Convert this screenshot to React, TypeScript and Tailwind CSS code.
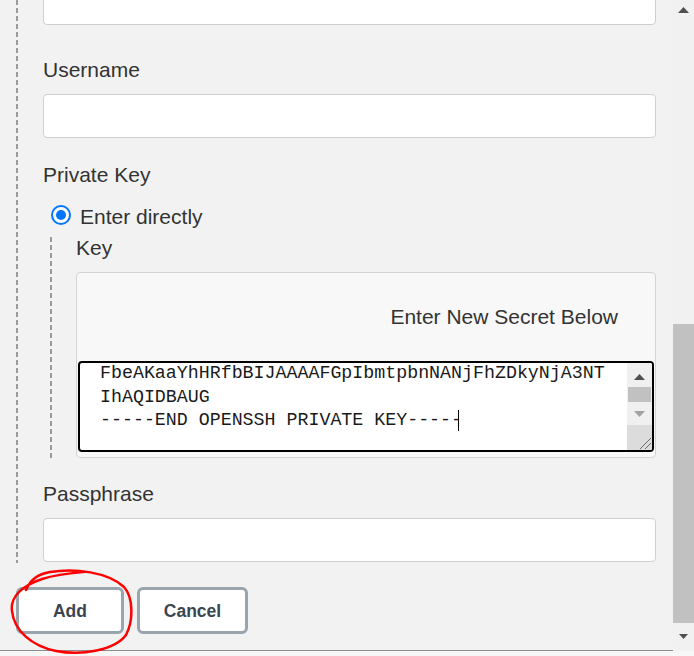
import React from "react";

const SANS = { fontFamily: '"Liberation Sans", Arial, sans-serif' };

function Label({ children }: { children: React.ReactNode }) {
  return (
    <div className="text-[21px] leading-[24px] text-[#333333]" style={SANS}>
      {children}
    </div>
  );
}

function TextInput({ className = "" }: { className?: string }) {
  return (
    <div
      className={`h-[44px] w-full rounded-[4px] border border-[#cfcfcf] bg-white ${className}`}
    />
  );
}

function KeyTextarea() {
  return (
    <div className="mx-[1px] flex h-[91px] overflow-hidden rounded-[4px] border-2 border-black bg-white">
      <div
        className="flex-1 overflow-hidden pl-[20px] text-[18.3px] leading-[23.5px] text-[#1a1a1a]"
        style={{ fontFamily: '"Liberation Mono", "Courier New", monospace' }}
      >
        <div className="mt-[-1px] whitespace-pre">FbeAKaaYhHRfbBIJAAAAFGpIbmtpbnNANjFhZDkyNjA3NT</div>
        <div className="whitespace-pre">IhAQIDBAUG</div>
        <div className="flex items-center whitespace-pre">
          <span>-----END OPENSSH PRIVATE KEY-----</span>
          <span className="ml-[-4px] inline-block h-[21px] w-[1px] bg-black" />
        </div>
      </div>
      <div className="flex w-[25px] flex-col bg-[#f0f0f0]">
        <div className="flex h-[24px] items-end justify-center pb-[7px]">
          <svg width="11" height="6" viewBox="0 0 11 6">
            <polygon points="5.5,0 11,6 0,6" fill="#505050" />
          </svg>
        </div>
        <div className="mx-[1px] h-[15px] bg-[#c1c1c1]" />
        <div className="flex h-[23px] items-start justify-center pt-[9px]">
          <svg width="11" height="6" viewBox="0 0 11 6">
            <polygon points="0,0 11,0 5.5,6" fill="#a3a3a3" />
          </svg>
        </div>
        <div className="relative flex-1 bg-[#dcdcdc]">
          <svg className="absolute bottom-0 right-0" width="14" height="14" viewBox="0 0 14 14">
            <line x1="13" y1="2" x2="2" y2="13" stroke="#6b6b6b" strokeWidth="1" />
            <line x1="13" y1="7" x2="7" y2="13" stroke="#6b6b6b" strokeWidth="1" />
          </svg>
        </div>
      </div>
    </div>
  );
}

const DASH =
  "bg-[repeating-linear-gradient(to_bottom,#9a9a9a_0px,#9a9a9a_5px,transparent_5px,transparent_8px)]";

export default function App() {
  return (
    <div className="relative h-[656px] w-[694px] overflow-hidden bg-[#f2f2f2]" style={SANS}>
      <div className="flex h-[650px]">
        {/* main column */}
        <div className="flex w-[673px] flex-col">
          <div className="flex">
            <div className="w-[16px]" />
            <div className={`w-[2px] ${DASH}`} />
            <div className="w-[638px] pl-[25px]">
              <TextInput className="mt-[-19px]" />
              <div className="mt-[33px]">
                <Label>Username</Label>
              </div>
              <TextInput className="mt-[12px]" />
              <div className="mt-[25px]">
                <Label>Private Key</Label>
              </div>
              <div className="mt-[16px] flex h-[24px] items-center pl-[8px]">
                <div className="flex h-[20px] w-[20px] items-center justify-center rounded-full border-[2.5px] border-[#0075ff] bg-white">
                  <div className="h-[10px] w-[10px] rounded-full bg-[#0075ff]" />
                </div>
                <div className="ml-[9px] mt-[3px] text-[21px] leading-[24px] text-[#333333]">Enter directly</div>
              </div>
              <div className="mt-[9px] flex">
                <div className="w-[7px]" />
                <div className={`w-[2px] ${DASH} mt-[1px]`} />
                <div className="flex-1 pl-[24px]">
                  <Label>Key</Label>
                  <div className="mt-[12px] h-[186px] rounded-[4px] border border-[#d4d4d4] bg-[#f8f8f8]">
                    <div className="mt-[30px] h-[28px] pr-[37px] text-right text-[21px] leading-[28px] text-[#333333]">
                      Enter New Secret Below
                    </div>
                    <div className="mt-[30px]">
                      <KeyTextarea />
                    </div>
                  </div>
                </div>
              </div>
              <div className="mt-[24px]">
                <Label>Passphrase</Label>
              </div>
              <TextInput className="mt-[12px]" />
              <div className="h-[1px]" />
            </div>
          </div>
          <div className="mt-[24px] flex gap-[13px] pl-[16px]">
            <button className="h-[47px] w-[108px] rounded-[6px] border-[3px] border-[#9aa4ad] bg-white pt-[2px] text-[17.5px] font-bold text-[#3b4550]">
              Add
            </button>
            <button className="h-[47px] w-[111px] rounded-[6px] border-[3px] border-[#9aa4ad] bg-white pt-[2px] text-[17.5px] font-bold text-[#3b4550]">
              Cancel
            </button>
          </div>
        </div>
        {/* page scrollbar */}
        <div className="flex w-[21px] flex-col bg-[#f1f1f1]">
          <div className="flex h-[20px] items-start justify-center pt-[7px]">
            <svg width="11" height="6" viewBox="0 0 11 6">
              <polygon points="5.5,0 11,6 0,6" fill="#505050" />
            </svg>
          </div>
          <div className="mt-[304px] h-[299px] bg-[#c1c1c1]" />
          <div className="flex flex-1 items-center justify-center">
            <svg width="9" height="5" viewBox="0 0 9 5">
              <polygon points="0,0 9,0 4.5,5" fill="#505050" />
            </svg>
          </div>
        </div>
      </div>
      <div className="h-[1px] w-[673px] bg-[#8c8c8c]" />
      <div className="h-[5px] bg-[#f7f7f7]" />

      {/* red hand-drawn annotation */}
      <svg className="pointer-events-none absolute left-0 top-0" width="694" height="656" viewBox="0 0 694 656">
        <path
          d="M 26 590 C 30 580, 38 574, 50 572 C 75 568, 108 572, 124 587 C 134 598, 133 622, 126 635 C 115 650, 82 656, 56 651 C 32 646, 14 631, 12 611 C 10 597, 22 586, 42 579 C 58 574, 72 573, 84 572"
          fill="none"
          stroke="#ff0000"
          strokeWidth="2.5"
          strokeLinecap="round"
          strokeLinejoin="round"
        />
      </svg>
    </div>
  );
}
